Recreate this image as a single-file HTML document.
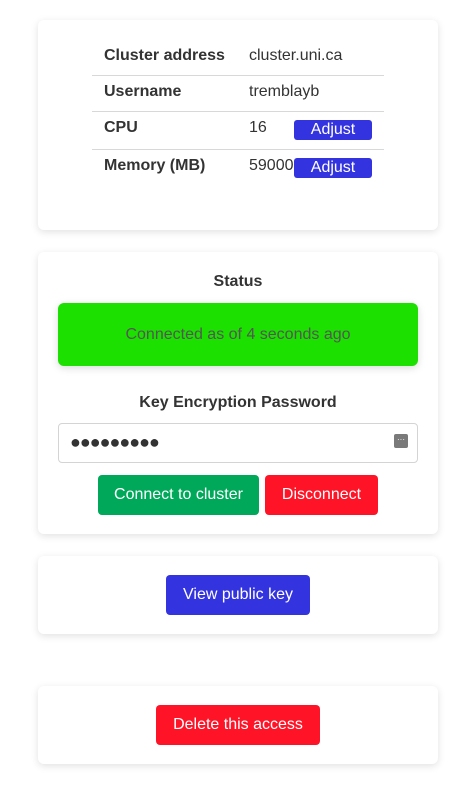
<!DOCTYPE html>
<html><head><style>
body{margin:0;width:476px;height:811px;background:#fff;font-family:"Liberation Sans",sans-serif;color:#333;position:relative;overflow:hidden}
.card{position:absolute;left:38px;width:400px;background:#fff;border-radius:6px;box-shadow:0 2px 8px rgba(0,0,0,.12)}
.a{position:absolute}
.b{font-weight:bold;font-size:16px}
.t{font-size:16px}
.line{position:absolute;left:92px;width:292px;height:1px;background:#d8d8d8}
.btn{position:absolute;border-radius:4px;color:#fff;font-size:16px;text-align:center}
.adj{background:#3333e0;width:78px;height:20px;line-height:19px;left:294px;border-radius:3px}
</style></head><body>
<div class="card" style="top:20px;height:210px"></div>
<div class="a b" style="left:104px;top:47px">Cluster address</div>
<div class="a t" style="left:249px;top:47px">cluster.uni.ca</div>
<div class="line" style="top:75px"></div>
<div class="a b" style="left:104px;top:83px">Username</div>
<div class="a t" style="left:249px;top:83px">tremblayb</div>
<div class="line" style="top:111px"></div>
<div class="a b" style="left:104px;top:119px">CPU</div>
<div class="a t" style="left:249px;top:119px">16</div>
<div class="btn adj" style="top:120px">Adjust</div>
<div class="line" style="top:149px"></div>
<div class="a b" style="left:104px;top:157px">Memory (MB)</div>
<div class="a t" style="left:249px;top:157px">59000</div>
<div class="btn adj" style="top:158px">Adjust</div>

<div class="card" style="top:252px;height:282px"></div>
<div class="a b" style="left:38px;width:400px;text-align:center;top:273px">Status</div>
<div class="a" style="left:58px;top:303px;width:360px;height:63px;background:#1ce000;border-radius:6px;box-shadow:0 2px 8px rgba(0,0,0,.15);text-align:center;line-height:63px;font-size:16px;color:#555">Connected as of 4 seconds ago</div>
<div class="a b" style="left:38px;width:400px;text-align:center;top:394px">Key Encryption Password</div>
<div class="a" style="left:58px;top:423px;width:358px;height:38px;border:1px solid #d4d4d4;border-radius:4px;background:#fff"></div>
<div class="a" style="left:70px;top:432px;font-size:18px;letter-spacing:-1px;color:#333">●●●●●●●●●</div>
<div class="a" style="left:394px;top:434px;width:14px;height:14px;background:#7a7a7a;border-radius:2px;color:#fff;font-size:8px;line-height:12px;text-align:center">···</div>
<div class="btn" style="left:98px;top:475px;width:161px;height:40px;line-height:40px;background:#00a85a">Connect to cluster</div>
<div class="btn" style="left:265px;top:475px;width:113px;height:40px;line-height:40px;background:#ff1427">Disconnect</div>

<div class="card" style="top:556px;height:78px"></div>
<div class="btn" style="left:166px;top:575px;width:144px;height:40px;line-height:40px;background:#3333e0">View public key</div>

<div class="card" style="top:686px;height:78px"></div>
<div class="btn" style="left:156px;top:705px;width:164px;height:40px;line-height:40px;background:#ff1427">Delete this access</div>
</body></html>
